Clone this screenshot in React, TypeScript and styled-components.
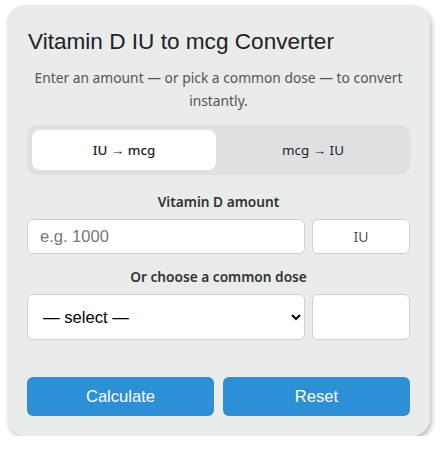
import React, { useState } from "react";
import styled, { createGlobalStyle } from "styled-components";

const GlobalStyle = createGlobalStyle`
  html, body {
    margin: 0;
    padding: 0;
    background: #ffffff;
  }
  body {
    padding: 5px 0 0 7px;
  }
`;

const Card = styled.div`
  box-sizing: border-box;
  width: 423px;
  height: 431px;
  background: #eaebeb;
  border-radius: 18px;
  box-shadow: 2px 3px 5px rgba(0, 0, 0, 0.25);
  padding: 23px 20px 20px 20px;
  display: flex;
  flex-direction: column;
`;

const Title = styled.h1`
  margin: 0 0 0 1px;
  font-family: "Liberation Sans", Arial, sans-serif;
  font-weight: 400;
  font-size: 22.6px;
  line-height: 28px;
  color: #222;
`;

const Subtitle = styled.p`
  margin: 10px 0 0 0;
  font-family: "Noto Sans", sans-serif;
  font-size: 13.8px;
  line-height: 23px;
  text-align: center;
  color: #555;
`;

const Tabs = styled.div`
  margin-top: 13px;
  display: flex;
  gap: 5px;
  padding: 5px;
  background: #dfe0e2;
  border-radius: 10px;
`;

const Tab = styled.button<{ $active: boolean }>`
  flex: 1;
  height: 40px;
  border: none;
  border-radius: 8px;
  background: ${p => (p.$active ? "#ffffff" : "transparent")};
  font-family: "Noto Sans", sans-serif;
  font-size: 13.4px;
  color: #222;
  font-weight: ${p => (p.$active ? 500 : 400)};
  cursor: pointer;
`;

const Label = styled.div<{ $top: number }>`
  margin-top: ${p => p.$top}px;
  margin-bottom: 8px;
  font-family: "Noto Sans", sans-serif;
  font-weight: 600;
  font-size: 13.7px;
  line-height: 18px;
  text-align: center;
  color: #333;
`;

const Row = styled.div`
  display: flex;
  gap: 7px;
`;

const Field = styled.input<{ $h: number }>`
  box-sizing: border-box;
  flex: 1;
  min-width: 0;
  height: ${p => p.$h}px;
  padding: 0 12px;
  border: 1px solid #cfcfcf;
  border-radius: 6px;
  background: #fff;
  font-family: "Liberation Sans", Arial, sans-serif;
  font-size: 16.5px;
  color: #222;
  outline: none;
  &::placeholder {
    color: #777;
  }
`;

const Unit = styled.div<{ $h: number }>`
  box-sizing: border-box;
  width: 98px;
  height: ${p => p.$h}px;
  border: 1px solid #cfcfcf;
  border-radius: 6px;
  background: #fff;
  display: flex;
  align-items: center;
  justify-content: center;
  font-family: "Noto Sans", sans-serif;
  font-size: 14px;
  color: #555;
`;

const Select = styled.select`
  box-sizing: border-box;
  flex: 1;
  min-width: 0;
  height: 46px;
  padding: 0 11px;
  border: 1px solid #cfcfcf;
  border-radius: 6px;
  background: #fff;
  font-family: "Liberation Sans", Arial, sans-serif;
  font-size: 16.6px;
  color: #000;
`;

const Actions = styled.div`
  margin-top: 37px;
  display: flex;
  gap: 9px;
`;

const ActionButton = styled.button`
  flex: 1;
  height: 39px;
  border: none;
  border-radius: 6px;
  background: #2d8fd6;
  color: #fff;
  font-family: "Liberation Sans", Arial, sans-serif;
  font-size: 16.6px;
  cursor: pointer;
`;

export default function App() {
  const [mode, setMode] = useState<"iu" | "mcg">("iu");
  return (
    <>
      <GlobalStyle />
      <Card>
        <Title>Vitamin D IU to mcg Converter</Title>
        <Subtitle>Enter an amount — or pick a common dose — to convert instantly.</Subtitle>
        <Tabs>
          <Tab $active={mode === "iu"} onClick={() => setMode("iu")}>
            IU → mcg
          </Tab>
          <Tab $active={mode === "mcg"} onClick={() => setMode("mcg")}>
            mcg → IU
          </Tab>
        </Tabs>
        <Label $top={18}>Vitamin D amount</Label>
        <Row>
          <Field $h={35} placeholder="e.g. 1000" />
          <Unit $h={35}>{mode === "iu" ? "IU" : "mcg"}</Unit>
        </Row>
        <Label $top={14}>Or choose a common dose</Label>
        <Row>
          <Select defaultValue="">
            <option value="">— select —</option>
            <option value="400">400 IU</option>
            <option value="1000">1000 IU</option>
            <option value="2000">2000 IU</option>
          </Select>
          <Unit $h={46} />
        </Row>
        <Actions>
          <ActionButton>Calculate</ActionButton>
          <ActionButton>Reset</ActionButton>
        </Actions>
      </Card>
    </>
  );
}
